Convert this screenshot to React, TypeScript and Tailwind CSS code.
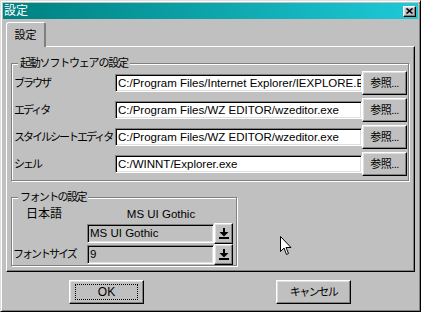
import React from "react";

const Raised = ({
    children,
    className = "",
}: {
    children?: React.ReactNode;
    className?: string;
}) => (
    <div
        className={`flex items-center justify-center shrink-0 bg-[#c0c0c0] border border-t-white border-l-white border-r-black border-b-black shadow-[inset_-1px_-1px_0_#808080,inset_1px_1px_0_#dfdfdf] ${className}`}
    >
        {children}
    </div>
);

const Sunken = ({
    children,
    className = "",
}: {
    children?: React.ReactNode;
    className?: string;
}) => (
    <div
        className={`shrink-0 overflow-hidden whitespace-nowrap border border-t-[#808080] border-l-[#808080] border-r-white border-b-white shadow-[inset_1px_1px_0_#000,inset_-1px_-1px_0_#dfdfdf] pl-[2px] text-[11.5px] leading-[16px] ${className}`}
    >
        {children}
    </div>
);

const DownArrow = () => (
    <svg width="10" height="11" viewBox="0 0 10 11">
        <rect x="4" y="0" width="2" height="5" fill="#000" />
        <polygon points="0.5,4 9.5,4 5,8.5" fill="#000" />
        <rect x="0" y="9" width="10" height="2" fill="#000" />
    </svg>
);

const programs = [
    { label: "ブラウザ", path: "C:/Program Files/Internet Explorer/IEXPLORE.EXE" },
    { label: "エディタ", path: "C:/Program Files/WZ EDITOR/wzeditor.exe" },
    { label: "スタイルシートエディタ", path: "C:/Program Files/WZ EDITOR/wzeditor.exe" },
    { label: "シェル", path: "C:/WINNT/Explorer.exe" },
];

export default function App() {
    return (
        <div className="relative w-[421px] h-[312px] bg-[#c0c0c0] border border-t-[#dfdfdf] border-l-[#dfdfdf] border-r-black border-b-black shadow-[inset_1px_1px_0_#fff,inset_-1px_-1px_0_#808080] p-[2px] flex flex-col text-black text-[12px] font-['Liberation_Sans','Noto_Sans_CJK_JP',sans-serif]">
            {/* Title bar */}
            <div className="h-[16px] flex items-center justify-between bg-gradient-to-r from-[#008080] to-[#1ccad8] pl-[1px] pr-[2px]">
                <span className="text-white text-[12px] leading-[16px]">設定</span>
                <Raised className="w-[13px] h-[11px]">
                    <svg width="7" height="6" viewBox="0 0 7 6">
                        <path d="M0.5 0.5 L6.5 5.5 M6.5 0.5 L0.5 5.5" stroke="#000" strokeWidth="1.6" />
                    </svg>
                </Raised>
            </div>

            {/* Tabs */}
            <div className="mt-[3px] pl-[3px] flex">
                <div className="relative z-10 -mb-[1px] w-[40px] h-[25px] bg-[#c0c0c0] border-l border-t border-white border-r-2 border-r-[#808080] rounded-tl-[3px] rounded-tr-[3px] flex items-center justify-center text-[11px] pt-[1px]">
                    設定
                </div>
            </div>

            {/* Panel */}
            <div className="ml-[3px] w-[409px] h-[226px] border border-t-white border-l-white border-r-black border-b-black shadow-[inset_-1px_-1px_0_#808080] pt-[16px] pl-[4px]">
                {/* 起動ソフトウェアの設定 */}
                <div className="relative w-[398px] border border-[#808080] shadow-[inset_1px_1px_0_#fff,1px_1px_0_#fff] pt-[7px] pb-[4px] pl-[2px] flex flex-col gap-[3px]">
                    <span className="absolute -top-[8px] left-[6px] px-[2px] bg-[#c0c0c0] text-[11px] leading-[14px] tracking-[-1.2px]">
                        起動ソフトウェアの設定
                    </span>
                    {programs.map((p) => (
                        <div key={p.label} className="flex items-center h-[24px]">
                            <span className="w-[101px] text-[11px] tracking-[-2px] whitespace-nowrap">
                                {p.label}
                            </span>
                            <Sunken className="w-[247px] h-[18px] bg-white">{p.path}</Sunken>
                            <Raised className="w-[45px] h-[24px] text-[11px] tracking-[-0.5px]">
                                参照...
                            </Raised>
                        </div>
                    ))}
                </div>

                {/* フォントの設定 */}
                <div className="relative mt-[16px] w-[226px] border border-[#808080] shadow-[inset_1px_1px_0_#fff,1px_1px_0_#fff] pt-[9px] grid grid-cols-[75px_146px]">
                    <span className="absolute -top-[8px] left-[6px] px-[2px] bg-[#c0c0c0] text-[11px] leading-[14px] tracking-[-1.6px]">
                        フォントの設定
                    </span>
                    <span className="pl-[14px] h-[14px] leading-[14px] text-[12px]">日本語</span>
                    <span className="h-[14px] leading-[14px] text-center text-[11.5px] pl-[2px]">MS UI Gothic</span>

                    <span className="mt-[2px]" />
                    <div className="mt-[2px] flex items-center h-[21px]">
                        <Sunken className="w-[127px] h-[19px] bg-[#c0c0c0]">MS UI Gothic</Sunken>
                        <Raised className="w-[19px] h-[21px]">
                            <DownArrow />
                        </Raised>
                    </div>

                    <span className="pl-[1px] h-[21px] flex items-center text-[11px] tracking-[-2px] whitespace-nowrap">
                        フォントサイズ
                    </span>
                    <div className="flex items-center h-[21px]">
                        <Sunken className="w-[127px] h-[19px] bg-[#c0c0c0]">9</Sunken>
                        <Raised className="w-[19px] h-[21px]">
                            <DownArrow />
                        </Raised>
                    </div>
                </div>
            </div>

            {/* Buttons */}
            <div className="mt-[8px] pl-[66px] flex gap-[132px]">
                <Raised className="w-[75px] h-[24px] px-[5px] py-[3px]">
                    <div className="w-full h-full border border-dotted border-black flex items-center justify-center text-[12px]">
                        OK
                    </div>
                </Raised>
                <Raised className="w-[75px] h-[24px] text-[11px] tracking-[-1.5px]">キャンセル</Raised>
            </div>

            {/* Mouse pointer */}
            <svg
                className="absolute left-[279px] top-[235px]"
                width="12"
                height="20"
                viewBox="0 0 12 20"
            >
                <path
                    d="M0.5 0.5 L0.5 15.5 L4 12 L6.5 18.5 L8.5 17.5 L6 11.5 L11 11.5 Z"
                    fill="#fff"
                    stroke="#000"
                    strokeWidth="1"
                    strokeLinejoin="miter"
                />
            </svg>
        </div>
    );
}
